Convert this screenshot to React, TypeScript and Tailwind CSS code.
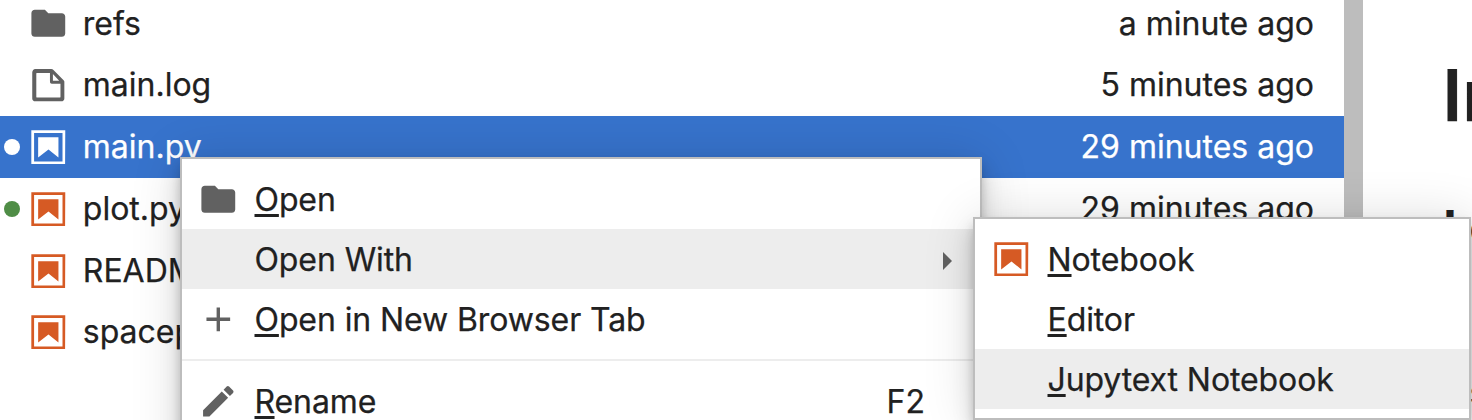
import React from "react";

type IconName = "folder" | "file" | "notebook" | "add" | "edit";

function Icon({ name, className = "text-[#616161]" }: { name: IconName; className?: string }) {
  const box = name === "folder" || name === "add" || name === "edit" ? "0 0 24 24" : "0 0 22 22";
  return (
    <svg viewBox={box} className={`h-[40.6px] w-[40.6px] shrink-0 ${className}`} fill="currentColor">
      {name === "folder" && (
        <path d="M10 4H4c-1.1 0-1.99.9-1.99 2L2 18c0 1.1.9 2 2 2h16c1.1 0 2-.9 2-2V8c0-1.1-.9-2-2-2h-8l-2-2z" />
      )}
      {name === "file" && (
        <path d="M19.3 8.2l-5.5-5.5c-.3-.3-.7-.5-1.2-.5H3.9c-.8.1-1.6.9-1.6 1.8v14.1c0 .9.7 1.6 1.6 1.6h14.2c.9 0 1.6-.7 1.6-1.6V9.4c.1-.5-.1-.9-.4-1.2zm-5.8-3.3l3.4 3.6h-3.4V4.9zm3.9 12.7H4.7c-.1 0-.2 0-.2-.2V4.7c0-.2.1-.3.2-.3h7.2v4.4s0 .8.3 1.1c.3.3 1.1.3 1.1.3h4.3v7.2s-.1.2-.2.2z" />
      )}
      {name === "notebook" && (
        <>
          <path d="M18.7 3.3v15.4H3.3V3.3h15.4m1.5-1.5H1.8v18.3h18.3l.1-18.3z" />
          <path d="M16.5 16.5l-5.4-4.3-5.6 4.3v-11h11z" />
        </>
      )}
      {name === "add" && <path d="M19 13h-6v6h-2v-6H5v-2h6V5h2v6h6v2z" />}
      {name === "edit" && (
        <path d="M3 17.25V21h3.75L17.81 9.94l-3.75-3.75L3 17.25zM20.71 7.04c.39-.39.39-1.02 0-1.41l-2.34-2.34c-.39-.39-1.02-.39-1.41 0l-1.83 1.83 3.75 3.75 1.83-1.83z" />
      )}
    </svg>
  );
}

function FileRow({
  icon,
  name,
  time,
  dot,
  selected,
}: {
  icon: IconName;
  name: string;
  time?: string;
  dot?: string;
  selected?: boolean;
}) {
  const tint = selected ? "text-white" : icon === "notebook" ? "text-[#d65a24]" : "text-[#616161]";
  return (
    <div
      className={`group flex h-[62px] shrink-0 items-center pr-[30px] pl-1 last:-mt-px ${selected ? "bg-[#3773cc] text-white" : ""}`}
    >
      <span className={`size-4 shrink-0 rounded-full ${dot ?? ""}`} />
      <Icon name={icon} className={`ml-[7.7px] ${tint}`} />
      <span className="ml-[14.5px] flex-1 group-first:pt-[2px]">{name}</span>
      <span className="group-first:pt-[2px]">{time}</span>
    </div>
  );
}

function MenuItem({
  icon,
  label,
  mnemonic = true,
  active,
  children,
}: {
  icon?: IconName;
  label: string;
  mnemonic?: boolean;
  active?: boolean;
  children?: React.ReactNode;
}) {
  return (
    <div className={`flex h-[60px] shrink-0 items-center pl-[15.5px] ${active ? "bg-[#ededed]" : ""}`}>
      <span className="flex w-[57px] shrink-0">
        {icon && <Icon name={icon} className={icon === "notebook" ? "text-[#d65a24]" : "text-[#616161]"} />}
      </span>
      <span className="flex-1 pt-[2px] tracking-[-0.1px]">
        {mnemonic ? (
          <>
            <span className="underline decoration-[3px] underline-offset-[3px] [text-decoration-skip-ink:none]">
              {label[0]}
            </span>
            {label.slice(1)}
          </>
        ) : (
          label
        )}
      </span>
      {children}
    </div>
  );
}

export default function App() {
  return (
    <div className="relative flex h-[420px] w-[1472px] overflow-hidden bg-white font-['Inter',sans-serif] text-[32px] leading-[40px] font-normal whitespace-nowrap text-[#212121] [-webkit-text-stroke:0.25px_currentColor]">
      <div className="-mt-2 flex w-[1344px] shrink-0 flex-col">
        <FileRow icon="folder" name="refs" time="a minute ago" />
        <FileRow icon="file" name="main.log" time="5 minutes ago" />
        <FileRow icon="notebook" name="main.py" time="29 minutes ago" dot="bg-white" selected />
        <FileRow icon="notebook" name="plot.py" time="29 minutes ago" dot="bg-[#4f8d46]" />
        <FileRow icon="notebook" name="README.md" />
        <FileRow icon="notebook" name="spaceport.py" />
      </div>
      <div className="w-[19px] shrink-0 bg-[#bdbdbd]" />
      <div className="flex min-w-0 flex-1 flex-col overflow-hidden pt-[52px] pl-[79.5px]">
        <h1 className="text-[71px] leading-[87px] font-[590]">Introduction</h1>
        <h2 className="mt-[60px] pl-[1px] text-[46px] leading-[56px] font-bold">Lorem ipsum</h2>
        <p className="mt-[118px] pl-[27px]">s</p>
      </div>

      <div className="absolute top-[157px] left-[180px] flex h-[400px] w-[802px] flex-col border-2 border-[#bdbdbd] bg-white pt-[10px] shadow-[0_6px_10px_-2px_rgba(0,0,0,0.2),0_12px_20px_0_rgba(0,0,0,0.14),0_2px_48px_0_rgba(0,0,0,0.14)]">
        <MenuItem icon="folder" label="Open" />
        <MenuItem label="Open With" mnemonic={false} active>
          <svg viewBox="0 0 10 18" className="mt-1 mr-[27px] h-[18px] w-[10px]" fill="#616161">
            <path d="M0 0L9 9L0 18z" />
          </svg>
        </MenuItem>
        <MenuItem icon="add" label="Open in New Browser Tab" />
        <div className="mt-[10px] mb-[10px] h-[2px] shrink-0 bg-[#ededed]" />
        <MenuItem icon="edit" label="Rename">
          <span className="mr-[55px] pt-[2px]">F2</span>
        </MenuItem>
      </div>

      <div className="absolute top-[217px] left-[973px] flex h-[203px] w-[498px] flex-col border-2 border-[#bdbdbd] bg-white pt-[10px] shadow-[0_6px_10px_-2px_rgba(0,0,0,0.2),0_12px_20px_0_rgba(0,0,0,0.14),0_2px_48px_0_rgba(0,0,0,0.14)]">
        <MenuItem icon="notebook" label="Notebook" />
        <MenuItem label="Editor" />
        <MenuItem label="Jupytext Notebook" active />
      </div>
    </div>
  );
}
